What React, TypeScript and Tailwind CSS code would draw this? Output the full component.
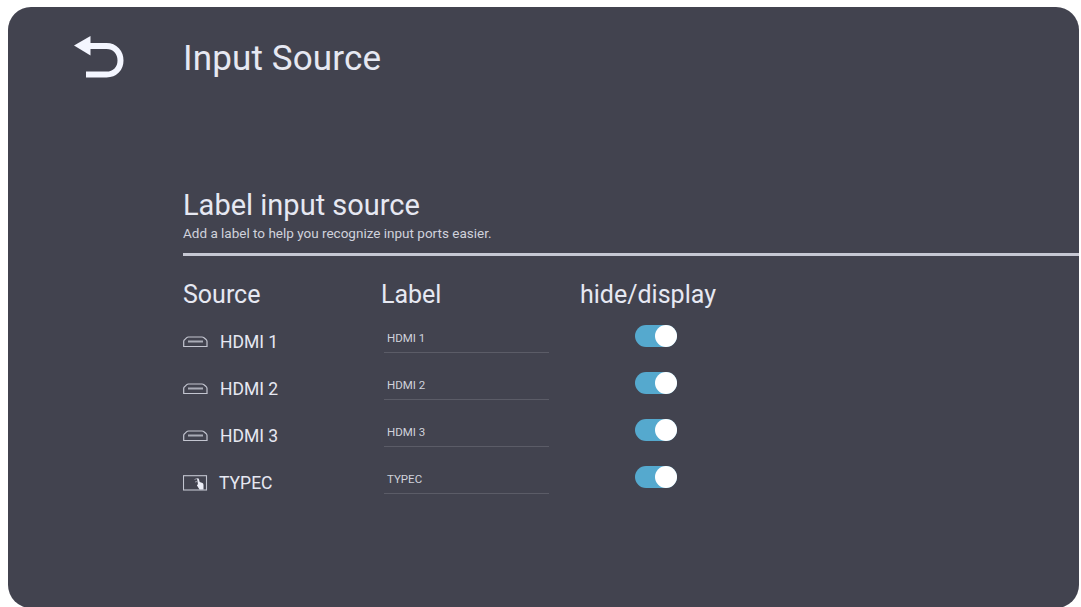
const sources = [
  { name: 'HDMI 1', type: 'hdmi' },
  { name: 'HDMI 2', type: 'hdmi' },
  { name: 'HDMI 3', type: 'hdmi' },
  { name: 'TYPEC', type: 'typec' },
]

function BackIcon() {
  return (
    <svg width="50" height="44" viewBox="0 0 50 44" fill="none">
      <path d="M0 9.500 16.500 0V19.500Z" fill="#f4f6ff" />
      <path d="M14 10H32.500C41 10 46.500 16.500 46.500 24.500S41 38.500 32.500 38.500H12" stroke="#f4f6ff" strokeWidth="6" />
    </svg>
  )
}

function HdmiIcon() {
  return (
    <svg width="26" height="12" viewBox="0 0 26 12" fill="none" stroke="#c3c5d0">
      <path d="M.7 10.500V5.500Q.7 4.500 1.500 3.800L3.500 1.800Q4.300 1 5.500 1H19Q20.200 1 21 1.800L23.300 3.800Q24 4.500 24 5.500V10.500Z" strokeWidth="1.200" />
      <path d="M5 5.500H20" strokeWidth="2" opacity="0.8" />
    </svg>
  )
}

function TypecIcon() {
  return (
    <svg width="26" height="16" viewBox="0 0 26 16" fill="none">
      <rect x="0.500" y="0.700" width="23" height="14.300" stroke="#c3c5d0" strokeWidth="1.100" />
      <path d="M11.500 4.500 14 3.500M12 7 14 6.500" stroke="#a4a6b1" strokeWidth="0.900" />
      <path d="M14 3.500Q15.500 2.500 16 4.500L16.700 7 19.500 8Q20.500 8.500 20.500 10V14.500H16.500L14 10.500Q13.500 9.500 15 9.500Z" fill="#eceef7" />
    </svg>
  )
}

function Toggle() {
  return (
    <button role="switch" aria-checked="true" className="flex h-[22px] w-[42px] justify-end rounded-full bg-[#55a9ce]">
      <span className="size-[22px] rounded-full bg-white" />
    </button>
  )
}

export default function App() {
  return (
    <main className="h-[607px] overflow-hidden bg-white pt-[7px] pr-[2px] pl-[8px] font-['Roboto',sans-serif] text-[#e6e8f2]">
      <div className="h-[601px] rounded-[23px] bg-[#42434f]">
        <header className="flex h-[181px] pt-[29px] pl-[66px]">
          <div className="w-[109px]">
            <BackIcon />
          </div>
          <h1 className="mt-[3px] text-[35px] leading-10 tracking-[0.15px] whitespace-nowrap">Input Source</h1>
        </header>

        <section className="ml-[175px]">
          <div className="h-[68px] border-b-[3px] border-[#c6c8d3]">
            <h2 className="h-[35px] text-[29px] leading-[35px]">Label input source</h2>
            <p className="text-[13.500px] leading-5 text-[#d0d2dc]">Add a label to help you recognize input ports easier.</p>
          </div>

          <div className="grid h-[62px] grid-cols-[198px_199px_auto] pt-[23px] text-[25px] leading-8">
            <h3>Source</h3>
            <h3>Label</h3>
            <h3>hide/display</h3>
          </div>

          {sources.map((source) => (
            <div key={source.name} className="grid h-[47px] grid-cols-[201px_251px_auto]">
              <div className="flex h-12 items-center">
                <span className={source.type === 'hdmi' ? 'w-[37px]' : 'w-[36px]'}>
                  {source.type === 'hdmi' ? <HdmiIcon /> : <TypecIcon />}
                </span>
                <span className="text-[17.500px]">{source.name}</span>
              </div>
              <div className="h-[35px] w-[165px] border-b border-[#5b5c67] pt-3 pl-[3px] text-[11.500px] leading-4 text-[#d0d2dc]">
                {source.name}
              </div>
              <div className="pt-[7px]">
                <Toggle />
              </div>
            </div>
          ))}
        </section>
      </div>
    </main>
  )
}
